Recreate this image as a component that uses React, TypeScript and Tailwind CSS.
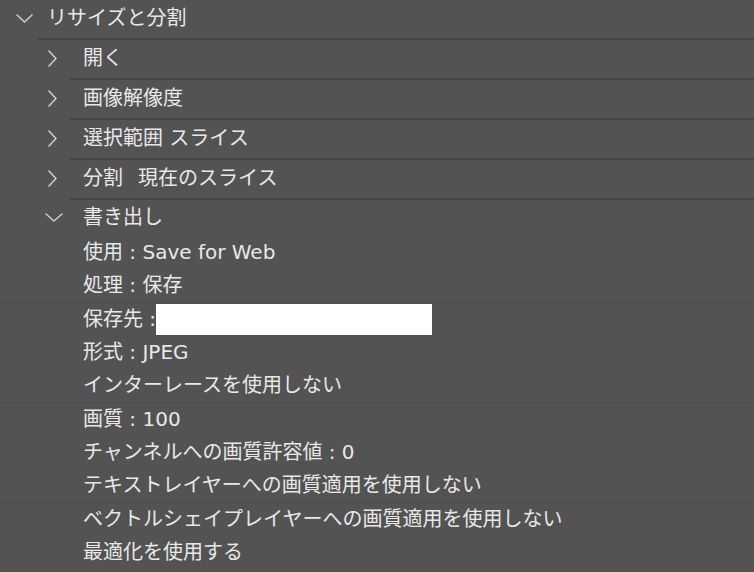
const font = { fontFamily: '"DejaVu Sans", "Noto Sans CJK JP", "Noto Sans", sans-serif' }

const ChevronDown = ({ w }: { w: number }) => (
    <svg width={w} height={9} viewBox={`0 0 ${w} 9`} fill="none">
        <path d={`M1 1 L${w / 2} 8 L${w - 1} 1`} stroke="#cfcfcf" strokeWidth="1.5" strokeLinecap="round" strokeLinejoin="round" />
    </svg>
)

const ChevronRight = () => (
    <svg width={9} height={17} viewBox="0 0 9 17" fill="none">
        <path d="M1 1 L8 8.5 L1 16" stroke="#cfcfcf" strokeWidth="1.5" strokeLinecap="round" strokeLinejoin="round" />
    </svg>
)

const groups = [
    ['開く'],
    ['画像解像度'],
    ['選択範囲 スライス'],
    ['分割', '現在のスライス'],
]

const items = [
    { text: '使用 : Save for Web' },
    { text: '処理 : 保存', line: true },
    { text: '保存先 : ', box: true },
    { text: '形式 : JPEG' },
    { text: 'インターレースを使用しない', line: true },
    { text: '画質 : 100' },
    { text: 'チャンネルへの画質許容値 : 0' },
    { text: 'テキストレイヤーへの画質適用を使用しない', line: true },
    { text: 'ベクトルシェイプレイヤーへの画質適用を使用しない' },
    { text: '最適化を使用する' },
]

export default function App() {
    return (
        <div className="w-[754px] h-[572px] overflow-hidden bg-[#535353] text-[#e8e8e8] text-[20px] leading-none" style={font}>
            {/* top level */}
            <div className="h-[38px] flex items-center">
                <div className="w-[47px] flex justify-center pl-[2px] pb-[2px]">
                    <ChevronDown w={17} />
                </div>
                <span className="pb-[3px]">リサイズと分割</span>
            </div>
            <div className="h-[2px] ml-[38px] bg-[#464646]" />

            {groups.map(g => (
                <div key={g.join()}>
                    <div className="h-[38px] flex items-center">
                        <div className="w-[83px] flex justify-start pl-[48px] pb-[1px]">
                            <ChevronRight />
                        </div>
                        <span className="whitespace-pre pb-[2px]">{g[0]}</span>
                        {g[1] && <span className="ml-[15px] pb-[2px]">{g[1]}</span>}
                    </div>
                    <div className="h-[2px] ml-[70px] bg-[#464646]" />
                </div>
            ))}

            <div className="h-[36px] flex items-center">
                <div className="w-[83px] flex justify-start pl-[45px] pb-[2px]">
                    <ChevronDown w={18} />
                </div>
                <span className="pb-[3px]">書き出し</span>
            </div>

            {items.map(it => (
                <div
                    key={it.text}
                    className={`h-[33.33px] flex items-center pl-[83px] ${it.line ? 'border-b border-[#4a4a4a]' : ''}`}
                >
                    <span className="whitespace-pre pb-[1px]">{it.text}</span>
                    {it.box && <div className="w-[276px] h-[31px] bg-white ml-[-6px]" />}
                </div>
            ))}
        </div>
    )
}
